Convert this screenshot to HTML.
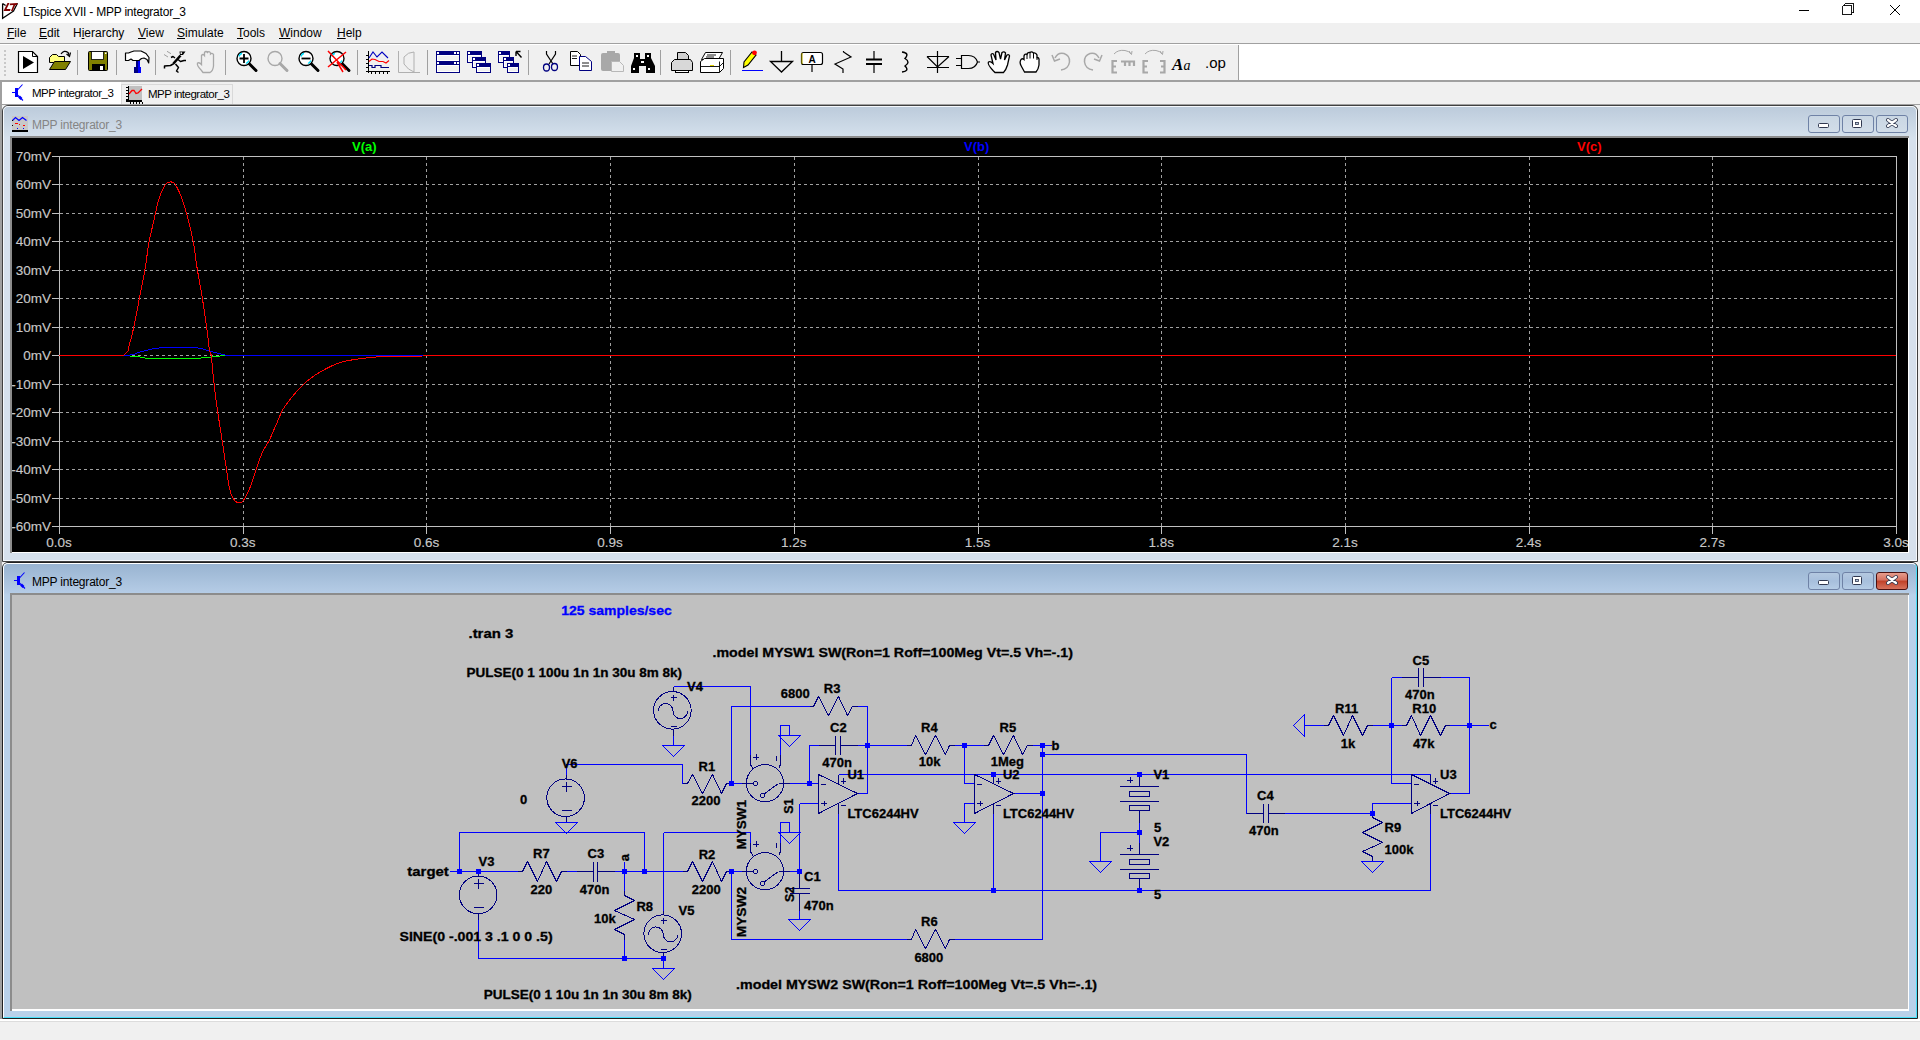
<!DOCTYPE html>
<html><head><meta charset="utf-8"><style>
html,body{margin:0;padding:0;width:1920px;height:1040px;overflow:hidden;background:#f0f0f0}
.t{position:absolute;font-family:"Liberation Sans",sans-serif;white-space:nowrap;line-height:1;color:#000}
svg{position:absolute;left:0;top:0}
</style></head><body>
<div style="position:absolute;left:0;top:0;width:1920px;height:23px;background:#fff"></div>
<div class="t" style="left:23px;top:6px;font-size:12px;letter-spacing:-0.22px;color:#000">LTspice XVII - MPP integrator_3</div>
<div style="position:absolute;left:0;top:23px;width:1920px;height:20px;background:#f0f0f0"></div>
<div style="position:absolute;left:0;top:43px;width:1920px;height:1px;background:#a0a0a0"></div>
<div style="position:absolute;left:0;top:44px;width:1920px;height:1px;background:#ffffff"></div>
<div class="t" style="left:7px;top:27px;font-size:12px"><u>F</u>ile</div>
<div class="t" style="left:39px;top:27px;font-size:12px"><u>E</u>dit</div>
<div class="t" style="left:73px;top:27px;font-size:12px">H<u>i</u>erarchy</div>
<div class="t" style="left:138px;top:27px;font-size:12px"><u>V</u>iew</div>
<div class="t" style="left:177px;top:27px;font-size:12px"><u>S</u>imulate</div>
<div class="t" style="left:237px;top:27px;font-size:12px"><u>T</u>ools</div>
<div class="t" style="left:279px;top:27px;font-size:12px"><u>W</u>indow</div>
<div class="t" style="left:337px;top:27px;font-size:12px"><u>H</u>elp</div>
<div style="position:absolute;left:0;top:45px;width:1238px;height:35px;background:#f0f0f0"></div>
<div style="position:absolute;left:1238px;top:45px;width:1px;height:35px;background:#a0a0a0"></div>
<div style="position:absolute;left:1239px;top:45px;width:681px;height:35px;background:#fff"></div>
<div style="position:absolute;left:0;top:80px;width:1920px;height:2px;background:#a0a0a0"></div>
<div style="position:absolute;left:0;top:82px;width:1920px;height:23px;background:#f0f0f0"></div>
<div style="position:absolute;left:0;top:80px;width:2px;height:940px;background:#a0a0a0"></div>
<div style="position:absolute;left:2px;top:82px;width:119px;height:22px;background:#fff"></div>
<div style="position:absolute;left:121px;top:84px;width:112px;height:20px;background:#f0f0f0;box-sizing:border-box;border:1px solid #d9d9d9;border-bottom:none"></div>
<div class="t" style="left:32px;top:88px;font-size:11.5px;letter-spacing:-0.5px">MPP integrator_3</div>
<div class="t" style="left:148px;top:89px;font-size:11.5px;letter-spacing:-0.5px">MPP integrator_3</div>
<div style="position:absolute;left:2px;top:104px;width:1918px;height:1px;background:#a0a0a0"></div>
<div style="position:absolute;left:2px;top:105px;width:1918px;height:916px;background:#f0f0f0"></div>
<div style="position:absolute;left:0;top:1019px;width:1920px;height:2px;background:#ffffff"></div>
<div style="position:absolute;left:0;top:1021px;width:1920px;height:1px;background:#dcdcdc"></div>
<div style="position:absolute;left:0;top:1022px;width:1920px;height:18px;background:#f0f0f0"></div>
<div style="position:absolute;left:2px;top:105px;width:1916px;height:457px;box-sizing:border-box;border:1px solid #404040;border-radius:6px 6px 0 0;background:#d6e1ed"></div>
<div style="position:absolute;left:3px;top:106px;width:1914px;height:455px;box-sizing:border-box;border:1px solid #f4f8fc;border-radius:5px 5px 0 0;background:linear-gradient(#bccbdb 0px,#d3dfeb 28px,#d6e1ed 31px)"></div>
<div style="position:absolute;left:10px;top:136px;width:1899px;height:417px;background:#fff;border-top:2px solid #8c8c8c;border-left:2px solid #8c8c8c;box-sizing:border-box"></div>
<div style="position:absolute;left:12px;top:138px;width:1896px;height:414px;background:#000"></div>
<div class="t" style="left:32px;top:119px;font-size:12px;letter-spacing:-0.2px;color:#858585">MPP integrator_3</div>
<div style="position:absolute;left:2px;top:562px;width:1916px;height:457px;box-sizing:border-box;border:1px solid #202020;border-radius:6px 6px 0 0;background:#b9d1ea"></div>
<div style="position:absolute;left:3px;top:563px;width:1914px;height:455px;box-sizing:border-box;border:1px solid #ffffff;border-right-color:#48e0fa;border-bottom-color:#48e0fa;border-radius:5px 5px 0 0;background:linear-gradient(#99b4d1 0px,#b4cbe5 28px,#b9d1ea 31px)"></div>
<div style="position:absolute;left:10px;top:593px;width:1899px;height:418px;background:#fff;border-top:2px solid #8c8c8c;border-left:2px solid #8c8c8c;box-sizing:border-box"></div>
<div style="position:absolute;left:12px;top:595px;width:1896px;height:414px;background:#c0c0c0"></div>
<div class="t" style="left:32px;top:576px;font-size:12px;letter-spacing:-0.2px;color:#000">MPP integrator_3</div>
<svg width="1920" height="1040" viewBox="0 0 1920 1040" font-family="Liberation Sans">
<svg x="12" y="138" width="1896" height="414" viewBox="12 138 1896 414" overflow="hidden">
<g shape-rendering="crispEdges">
<line x1="243.5" y1="157" x2="243.5" y2="526" stroke="#a0a0a0" stroke-dasharray="3 3"/>
<line x1="426.5" y1="157" x2="426.5" y2="526" stroke="#a0a0a0" stroke-dasharray="3 3"/>
<line x1="610.5" y1="157" x2="610.5" y2="526" stroke="#a0a0a0" stroke-dasharray="3 3"/>
<line x1="794.5" y1="157" x2="794.5" y2="526" stroke="#a0a0a0" stroke-dasharray="3 3"/>
<line x1="978.5" y1="157" x2="978.5" y2="526" stroke="#a0a0a0" stroke-dasharray="3 3"/>
<line x1="1161.5" y1="157" x2="1161.5" y2="526" stroke="#a0a0a0" stroke-dasharray="3 3"/>
<line x1="1345.5" y1="157" x2="1345.5" y2="526" stroke="#a0a0a0" stroke-dasharray="3 3"/>
<line x1="1529.5" y1="157" x2="1529.5" y2="526" stroke="#a0a0a0" stroke-dasharray="3 3"/>
<line x1="1712.5" y1="157" x2="1712.5" y2="526" stroke="#a0a0a0" stroke-dasharray="3 3"/>
<line x1="60" y1="184.5" x2="1896" y2="184.5" stroke="#a0a0a0" stroke-dasharray="3 3"/>
<line x1="60" y1="213.5" x2="1896" y2="213.5" stroke="#a0a0a0" stroke-dasharray="3 3"/>
<line x1="60" y1="241.5" x2="1896" y2="241.5" stroke="#a0a0a0" stroke-dasharray="3 3"/>
<line x1="60" y1="270.5" x2="1896" y2="270.5" stroke="#a0a0a0" stroke-dasharray="3 3"/>
<line x1="60" y1="298.5" x2="1896" y2="298.5" stroke="#a0a0a0" stroke-dasharray="3 3"/>
<line x1="60" y1="327.5" x2="1896" y2="327.5" stroke="#a0a0a0" stroke-dasharray="3 3"/>
<line x1="60" y1="355.5" x2="1896" y2="355.5" stroke="#a0a0a0" stroke-dasharray="3 3"/>
<line x1="60" y1="384.5" x2="1896" y2="384.5" stroke="#a0a0a0" stroke-dasharray="3 3"/>
<line x1="60" y1="412.5" x2="1896" y2="412.5" stroke="#a0a0a0" stroke-dasharray="3 3"/>
<line x1="60" y1="441.5" x2="1896" y2="441.5" stroke="#a0a0a0" stroke-dasharray="3 3"/>
<line x1="60" y1="469.5" x2="1896" y2="469.5" stroke="#a0a0a0" stroke-dasharray="3 3"/>
<line x1="60" y1="498.5" x2="1896" y2="498.5" stroke="#a0a0a0" stroke-dasharray="3 3"/>
<rect x="59.5" y="156.5" width="1837" height="370" fill="none" stroke="#c0c0c0"/>
<line x1="59.5" y1="526" x2="59.5" y2="534" stroke="#c0c0c0"/>
<line x1="243.5" y1="526" x2="243.5" y2="534" stroke="#c0c0c0"/>
<line x1="426.5" y1="526" x2="426.5" y2="534" stroke="#c0c0c0"/>
<line x1="610.5" y1="526" x2="610.5" y2="534" stroke="#c0c0c0"/>
<line x1="794.5" y1="526" x2="794.5" y2="534" stroke="#c0c0c0"/>
<line x1="978.5" y1="526" x2="978.5" y2="534" stroke="#c0c0c0"/>
<line x1="1161.5" y1="526" x2="1161.5" y2="534" stroke="#c0c0c0"/>
<line x1="1345.5" y1="526" x2="1345.5" y2="534" stroke="#c0c0c0"/>
<line x1="1529.5" y1="526" x2="1529.5" y2="534" stroke="#c0c0c0"/>
<line x1="1712.5" y1="526" x2="1712.5" y2="534" stroke="#c0c0c0"/>
<line x1="1896.5" y1="526" x2="1896.5" y2="534" stroke="#c0c0c0"/>
<line x1="52" y1="156.5" x2="59" y2="156.5" stroke="#c0c0c0"/>
<line x1="52" y1="184.5" x2="59" y2="184.5" stroke="#c0c0c0"/>
<line x1="52" y1="213.5" x2="59" y2="213.5" stroke="#c0c0c0"/>
<line x1="52" y1="241.5" x2="59" y2="241.5" stroke="#c0c0c0"/>
<line x1="52" y1="270.5" x2="59" y2="270.5" stroke="#c0c0c0"/>
<line x1="52" y1="298.5" x2="59" y2="298.5" stroke="#c0c0c0"/>
<line x1="52" y1="327.5" x2="59" y2="327.5" stroke="#c0c0c0"/>
<line x1="52" y1="355.5" x2="59" y2="355.5" stroke="#c0c0c0"/>
<line x1="52" y1="384.5" x2="59" y2="384.5" stroke="#c0c0c0"/>
<line x1="52" y1="412.5" x2="59" y2="412.5" stroke="#c0c0c0"/>
<line x1="52" y1="441.5" x2="59" y2="441.5" stroke="#c0c0c0"/>
<line x1="52" y1="469.5" x2="59" y2="469.5" stroke="#c0c0c0"/>
<line x1="52" y1="498.5" x2="59" y2="498.5" stroke="#c0c0c0"/>
<line x1="52" y1="526.5" x2="59" y2="526.5" stroke="#c0c0c0"/>
</g>
<g font-family="Liberation Sans" font-size="13.5" fill="#c8c8c8" stroke="#c8c8c8" stroke-width="0.15">
<text x="51" y="161" text-anchor="end">70mV</text>
<text x="51" y="189" text-anchor="end">60mV</text>
<text x="51" y="218" text-anchor="end">50mV</text>
<text x="51" y="246" text-anchor="end">40mV</text>
<text x="51" y="275" text-anchor="end">30mV</text>
<text x="51" y="303" text-anchor="end">20mV</text>
<text x="51" y="332" text-anchor="end">10mV</text>
<text x="51" y="360" text-anchor="end">0mV</text>
<text x="51" y="389" text-anchor="end">-10mV</text>
<text x="51" y="417" text-anchor="end">-20mV</text>
<text x="51" y="446" text-anchor="end">-30mV</text>
<text x="51" y="474" text-anchor="end">-40mV</text>
<text x="51" y="503" text-anchor="end">-50mV</text>
<text x="51" y="531" text-anchor="end">-60mV</text>
<text x="59.0" y="547" text-anchor="middle">0.0s</text>
<text x="242.7" y="547" text-anchor="middle">0.3s</text>
<text x="426.4" y="547" text-anchor="middle">0.6s</text>
<text x="610.1" y="547" text-anchor="middle">0.9s</text>
<text x="793.8" y="547" text-anchor="middle">1.2s</text>
<text x="977.5" y="547" text-anchor="middle">1.5s</text>
<text x="1161.2" y="547" text-anchor="middle">1.8s</text>
<text x="1344.9" y="547" text-anchor="middle">2.1s</text>
<text x="1528.6" y="547" text-anchor="middle">2.4s</text>
<text x="1712.3" y="547" text-anchor="middle">2.7s</text>
<text x="1896.0" y="547" text-anchor="middle">3.0s</text>
</g>
<g font-family="Liberation Sans" font-size="13" font-weight="bold">
<text x="352" y="151" fill="#00ff00">V(a)</text>
<text x="964" y="151" fill="#0000ff">V(b)</text>
<text x="1577" y="151" fill="#ff0000">V(c)</text>
</g>
<polyline points="125.00,355.50 126.67,355.66 129.00,355.89 131.75,356.16 134.67,356.44 137.50,356.73 140.00,357.00 141.85,357.27 143.19,357.56 144.44,357.84 146.04,358.11 148.41,358.34 152.00,358.50 157.35,358.60 164.22,358.65 171.88,358.66 179.56,358.63 186.51,358.58 192.00,358.50 195.84,358.40 198.59,358.26 200.62,358.09 202.30,357.91 203.97,357.71 206.00,357.50 208.41,357.27 210.93,357.00 213.44,356.72 215.85,356.44 218.07,356.20 220.00,356.00 221.65,355.85 223.11,355.74 224.38,355.66 225.44,355.59 226.32,355.54 227.00,355.50" fill="none" stroke="#00ff00" stroke-width="1" shape-rendering="crispEdges"/>
<polyline points="59.00,355.50 66.64,355.54 77.67,355.63 90.50,355.72 103.56,355.76 115.25,355.70 124.00,355.50 129.57,355.11 133.19,354.56 135.44,353.91 136.93,353.22 138.25,352.57 140.00,352.00 141.99,351.52 143.70,351.06 145.25,350.64 146.74,350.24 148.29,349.86 150.00,349.50 151.69,349.15 153.22,348.81 154.81,348.49 156.67,348.21 158.99,347.98 162.00,347.80 166.08,347.70 171.15,347.66 176.69,347.66 182.19,347.70 187.13,347.75 191.00,347.80 193.65,347.83 195.46,347.84 196.72,347.87 197.70,347.94 198.70,348.07 200.00,348.30 201.57,348.66 203.19,349.13 204.83,349.67 206.44,350.23 208.01,350.75 209.50,351.20 210.88,351.56 212.16,351.86 213.39,352.12 214.62,352.39 215.91,352.67 217.30,353.00 218.92,353.41 220.75,353.87 222.64,354.36 224.41,354.83 225.92,355.22 227.00,355.50 1896.00,355.50" fill="none" stroke="#0000ff" stroke-width="1" shape-rendering="crispEdges"/>
<polyline points="59.00,355.50 123.30,355.50 128.60,350.20 129.30,344.00 129.54,343.28 129.87,342.39 130.26,341.29 130.70,339.93 131.19,338.28 131.70,336.30 132.25,333.95 132.86,331.26 133.50,328.28 134.18,325.06 134.88,321.65 135.60,318.10 136.35,314.33 137.13,310.27 137.94,306.03 138.77,301.69 139.59,297.35 140.40,293.10 141.21,288.94 142.04,284.80 142.86,280.66 143.67,276.51 144.46,272.32 145.20,268.10 145.88,263.77 146.50,259.33 147.10,254.86 147.70,250.44 148.32,246.16 149.00,242.10 149.74,238.30 150.52,234.71 151.33,231.25 152.16,227.86 152.98,224.47 153.80,221.00 154.60,217.38 155.40,213.66 156.19,209.93 157.00,206.30 157.84,202.89 158.70,199.80 159.62,196.99 160.61,194.37 161.61,191.96 162.60,189.80 163.54,187.90 164.40,186.30 165.14,185.06 165.80,184.17 166.41,183.56 167.00,183.13 167.62,182.80 168.30,182.50 169.06,182.22 169.87,182.04 170.71,181.96 171.54,182.00 172.35,182.18 173.10,182.50 173.77,182.92 174.37,183.42 174.94,184.06 175.52,184.88 176.16,185.94 176.90,187.30 177.75,188.97 178.69,190.91 179.68,193.09 180.69,195.48 181.71,198.06 182.70,200.80 183.68,203.77 184.67,207.00 185.66,210.43 186.64,213.95 187.59,217.50 188.50,221.00 189.37,224.41 190.21,227.79 191.03,231.19 191.81,234.67 192.57,238.29 193.30,242.10 193.99,246.19 194.64,250.55 195.26,255.04 195.86,259.54 196.47,263.94 197.10,268.10 197.75,271.99 198.40,275.69 199.05,279.28 199.70,282.84 200.35,286.45 201.00,290.20 201.65,294.12 202.31,298.16 202.96,302.26 203.60,306.34 204.22,310.34 204.80,314.20 205.35,317.96 205.87,321.69 206.37,325.34 206.84,328.87 207.28,332.23 207.70,335.40 208.08,338.42 208.42,341.36 208.73,344.12 209.03,346.67 209.31,348.91 209.60,350.80 209.87,351.97 210.12,352.40 210.36,352.54 210.60,352.83 210.88,353.70 211.20,355.60 211.57,358.67 211.96,362.60 212.38,367.12 212.83,371.95 213.30,376.83 213.80,381.50 214.32,386.01 214.87,390.60 215.44,395.24 216.04,399.90 216.66,404.56 217.30,409.20 217.97,413.80 218.67,418.37 219.39,422.94 220.13,427.54 220.87,432.18 221.60,436.90 222.34,441.79 223.10,446.86 223.86,451.97 224.60,457.01 225.32,461.83 226.00,466.30 226.61,470.48 227.17,474.49 227.71,478.29 228.24,481.83 228.79,485.08 229.40,488.00 230.05,490.56 230.71,492.79 231.40,494.72 232.12,496.40 232.89,497.88 233.70,499.20 234.59,500.35 235.57,501.29 236.58,502.02 237.60,502.55 238.59,502.87 239.50,503.00 240.32,502.94 241.07,502.70 241.78,502.26 242.50,501.60 243.26,500.68 244.10,499.50 245.04,497.99 246.06,496.14 247.11,494.06 248.18,491.80 249.22,489.45 250.20,487.10 251.10,484.72 251.94,482.26 252.75,479.71 253.57,477.07 254.45,474.33 255.40,471.50 256.45,468.45 257.57,465.16 258.74,461.78 259.94,458.45 261.13,455.31 262.30,452.50 263.45,450.12 264.60,448.09 265.75,446.24 266.90,444.44 268.05,442.54 269.20,440.40 270.35,438.00 271.50,435.46 272.64,432.82 273.79,430.13 274.94,427.44 276.10,424.80 277.22,422.18 278.30,419.53 279.39,416.89 280.52,414.27 281.74,411.70 283.10,409.20 284.62,406.77 286.29,404.37 288.04,402.03 289.84,399.75 291.64,397.53 293.40,395.40 295.11,393.35 296.80,391.38 298.49,389.48 300.20,387.64 301.97,385.85 303.80,384.10 305.68,382.40 307.58,380.77 309.53,379.18 311.54,377.63 313.66,376.11 315.90,374.60 318.34,373.07 320.97,371.51 323.70,369.98 326.43,368.52 329.06,367.18 331.50,366.00 333.72,365.00 335.79,364.14 337.77,363.40 339.70,362.75 341.62,362.16 343.60,361.60 345.56,361.10 347.44,360.70 349.33,360.36 351.28,360.04 353.38,359.74 355.70,359.40 358.28,359.03 361.08,358.65 364.02,358.27 367.04,357.91 370.06,357.59 373.00,357.30 375.70,357.06 378.19,356.86 380.67,356.69 383.38,356.54 386.51,356.41 390.30,356.30 395.23,356.21 401.23,356.16 407.66,356.12 413.89,356.09 419.28,356.05 423.20,356.00 425.44,355.92 426.47,355.83 426.66,355.73 426.39,355.64 426.04,355.56 426.00,355.50 1896.00,355.50" fill="none" stroke="#ff0000" stroke-width="1" shape-rendering="crispEdges"/>
</svg>
<svg x="12" y="595" width="1896" height="414" viewBox="12 595 1896 414" overflow="hidden">
<g shape-rendering="crispEdges" stroke-width="1">
<polyline points="673.5,686.5 750.5,686.5 750.5,754.5" fill="none" stroke="#0000ff"/>
<polyline points="673.5,735.5 673.5,745.5" fill="none" stroke="#0000ff"/>
<polyline points="731.5,783.5 741.5,783.5" fill="none" stroke="#0000ff"/>
<polyline points="789.5,783.5 809.5,783.5" fill="none" stroke="#0000ff"/>
<polyline points="780.5,754.5 780.5,725.5 789.5,725.5 789.5,735.5" fill="none" stroke="#0000ff"/>
<polyline points="566.5,774.5 566.5,764.5 682.5,764.5 682.5,783.5" fill="none" stroke="#0000ff"/>
<polyline points="731.5,783.5 731.5,706.5 809.5,706.5" fill="none" stroke="#0000ff"/>
<polyline points="857.5,706.5 867.5,706.5 867.5,793.5 857.5,793.5" fill="none" stroke="#0000ff"/>
<polyline points="809.5,783.5 809.5,745.5 818.5,745.5" fill="none" stroke="#0000ff"/>
<polyline points="857.5,745.5 906.5,745.5" fill="none" stroke="#0000ff"/>
<polyline points="809.5,783.5 818.5,783.5" fill="none" stroke="#0000ff"/>
<polyline points="799.5,803.5 818.5,803.5" fill="none" stroke="#0000ff"/>
<polyline points="799.5,803.5 799.5,871.5" fill="none" stroke="#0000ff"/>
<polyline points="838.5,774.5 1430.5,774.5" fill="none" stroke="#0000ff"/>
<polyline points="838.5,813.5 838.5,890.5 1430.5,890.5 1430.5,813.5" fill="none" stroke="#0000ff"/>
<polyline points="954.5,745.5 983.5,745.5" fill="none" stroke="#0000ff"/>
<polyline points="1032.5,745.5 1051.5,745.5" fill="none" stroke="#0000ff"/>
<polyline points="964.5,745.5 964.5,783.5 974.5,783.5" fill="none" stroke="#0000ff"/>
<polyline points="974.5,803.5 964.5,803.5 964.5,822.5" fill="none" stroke="#0000ff"/>
<polyline points="1013.5,793.5 1042.5,793.5" fill="none" stroke="#0000ff"/>
<polyline points="993.5,813.5 993.5,890.5" fill="none" stroke="#0000ff"/>
<polyline points="1042.5,745.5 1042.5,939.5 954.5,939.5" fill="none" stroke="#0000ff"/>
<polyline points="1042.5,754.5 1246.5,754.5 1246.5,813.5" fill="none" stroke="#0000ff"/>
<polyline points="1284.5,813.5 1372.5,813.5" fill="none" stroke="#0000ff"/>
<polyline points="1139.5,822.5 1139.5,842.5" fill="none" stroke="#0000ff"/>
<polyline points="1139.5,832.5 1100.5,832.5 1100.5,861.5" fill="none" stroke="#0000ff"/>
<polyline points="1411.5,803.5 1372.5,803.5 1372.5,813.5" fill="none" stroke="#0000ff"/>
<polyline points="1391.5,677.5 1391.5,783.5 1411.5,783.5" fill="none" stroke="#0000ff"/>
<polyline points="1449.5,793.5 1469.5,793.5 1469.5,677.5 1440.5,677.5" fill="none" stroke="#0000ff"/>
<polyline points="1391.5,677.5 1401.5,677.5" fill="none" stroke="#0000ff"/>
<polyline points="1304.5,725.5 1323.5,725.5" fill="none" stroke="#0000ff"/>
<polyline points="1372.5,725.5 1401.5,725.5" fill="none" stroke="#0000ff"/>
<polyline points="1449.5,725.5 1488.5,725.5" fill="none" stroke="#0000ff"/>
<polyline points="449.5,871.5 517.5,871.5" fill="none" stroke="#0000ff"/>
<polyline points="566.5,871.5 576.5,871.5" fill="none" stroke="#0000ff"/>
<polyline points="614.5,871.5 682.5,871.5" fill="none" stroke="#0000ff"/>
<polyline points="478.5,919.5 478.5,958.5 663.5,958.5" fill="none" stroke="#0000ff"/>
<polyline points="459.5,871.5 459.5,832.5 644.5,832.5 644.5,871.5" fill="none" stroke="#0000ff"/>
<polyline points="663.5,832.5 663.5,910.5" fill="none" stroke="#0000ff"/>
<polyline points="663.5,832.5 750.5,832.5 750.5,842.5" fill="none" stroke="#0000ff"/>
<polyline points="624.5,861.5 624.5,890.5" fill="none" stroke="#0000ff"/>
<polyline points="624.5,939.5 624.5,958.5" fill="none" stroke="#0000ff"/>
<polyline points="663.5,958.5 663.5,968.5" fill="none" stroke="#0000ff"/>
<polyline points="731.5,871.5 741.5,871.5" fill="none" stroke="#0000ff"/>
<polyline points="789.5,871.5 799.5,871.5" fill="none" stroke="#0000ff"/>
<polyline points="780.5,842.5 780.5,822.5 789.5,822.5 789.5,832.5" fill="none" stroke="#0000ff"/>
<polyline points="731.5,871.5 731.5,939.5 906.5,939.5" fill="none" stroke="#0000ff"/>
<polyline points="799.5,910.5 799.5,919.5" fill="none" stroke="#0000ff"/>
<polyline points="566.5,822.5 566.5,822.5" fill="none" stroke="#0000ff"/>
<line x1="673.5" y1="686.5" x2="673.5" y2="691.5" stroke="#000080"/>
<line x1="673.5" y1="729.3749999999999" x2="673.5" y2="735.5" stroke="#000080"/>
<circle cx="672.39" cy="710.37" r="18.8" fill="none" stroke="#000080"/>
<line x1="670.5" y1="697.5" x2="676.5" y2="697.5" stroke="#000080"/>
<line x1="673.5" y1="694.5" x2="673.5" y2="700.5" stroke="#000080"/>
<line x1="670.5" y1="726.5" x2="676.5" y2="726.5" stroke="#000080"/>
<path d="M658.19 711.17 A 7.4 7.6 0 0 1 672.99 711.17 A 7.3 7.4 0 0 0 687.59 711.17" fill="none" stroke="#000080"/>
<polygon points="662.5,745.5 684.5,745.5 673.5,756.5" fill="none" stroke="#0000ff" stroke-linejoin="bevel"/>
<circle cx="765.00" cy="783.20" r="18.6" fill="none" stroke="#000080"/>
<line x1="750.5" y1="754.5" x2="750.5" y2="764.5" stroke="#000080"/>
<line x1="750.5" y1="764.5" x2="753.0" y2="769.0" stroke="#000080"/>
<line x1="780.5" y1="754.5" x2="780.5" y2="764.5" stroke="#000080"/>
<line x1="780.5" y1="764.5" x2="779.0" y2="767.5" stroke="#000080"/>
<line x1="753.2" y1="757.0" x2="758.8" y2="757.0" stroke="#000080"/>
<line x1="756.0" y1="754.2" x2="756.0" y2="759.8" stroke="#000080"/>
<line x1="776.0" y1="755.5" x2="776.0" y2="760.5" stroke="#000080"/>
<line x1="741.5" y1="783.5" x2="753.3" y2="783.5" stroke="#000080"/>
<circle cx="755.5" cy="783.5" r="2" fill="none" stroke="#000080"/>
<circle cx="762.5" cy="795.5" r="2" fill="none" stroke="#000080"/>
<line x1="764.0" y1="794.0" x2="778.5" y2="783.5" stroke="#000080"/>
<line x1="778.5" y1="783.5" x2="789.5" y2="783.5" stroke="#000080"/>
<polygon points="778.5,735.5 800.5,735.5 789.5,746.5" fill="none" stroke="#0000ff" stroke-linejoin="bevel"/>
<polyline points="682.50,783.50 687.50,783.50 692.50,774.50 702.50,793.50 712.50,774.50 721.50,793.50 726.50,783.50 731.50,783.50" fill="none" stroke="#000080" stroke-linejoin="bevel"/>
<polyline points="809.50,706.50 813.50,706.50 818.50,696.50 828.50,715.50 838.50,696.50 847.50,715.50 852.50,706.50 857.50,706.50" fill="none" stroke="#000080" stroke-linejoin="bevel"/>
<line x1="818.5" y1="745.5" x2="835.5" y2="745.5" stroke="#000080"/>
<line x1="840.5" y1="745.5" x2="857.5" y2="745.5" stroke="#000080"/>
<line x1="835.5" y1="735.5" x2="835.5" y2="754.5" stroke="#000080"/>
<line x1="840.5" y1="735.5" x2="840.5" y2="754.5" stroke="#000080"/>
<polygon points="818.5,774.5 857.5,793.5 818.5,813.5" fill="none" stroke="#000080"/>
<line x1="838.5" y1="774.5" x2="838.5" y2="783.5" stroke="#000080"/>
<line x1="838.5" y1="803.5" x2="838.5" y2="813.5" stroke="#000080"/>
<line x1="820.5" y1="784.0" x2="826.0999999999999" y2="784.0" stroke="#000080"/>
<line x1="821.2" y1="803.5" x2="826.8" y2="803.5" stroke="#000080"/>
<line x1="824.0" y1="800.7" x2="824.0" y2="806.3" stroke="#000080"/>
<line x1="840.7" y1="781.0" x2="846.3" y2="781.0" stroke="#000080"/>
<line x1="843.5" y1="778.2" x2="843.5" y2="783.8" stroke="#000080"/>
<line x1="840.7" y1="805.7" x2="846.3" y2="805.7" stroke="#000080"/>
<polygon points="974.5,774.5 1013.5,793.5 974.5,813.5" fill="none" stroke="#000080"/>
<line x1="993.5" y1="774.5" x2="993.5" y2="783.5" stroke="#000080"/>
<line x1="993.5" y1="803.5" x2="993.5" y2="813.5" stroke="#000080"/>
<line x1="976.5" y1="784.0" x2="982.0999999999999" y2="784.0" stroke="#000080"/>
<line x1="977.2" y1="803.5" x2="982.8" y2="803.5" stroke="#000080"/>
<line x1="980.0" y1="800.7" x2="980.0" y2="806.3" stroke="#000080"/>
<line x1="995.7" y1="781.0" x2="1001.3" y2="781.0" stroke="#000080"/>
<line x1="998.5" y1="778.2" x2="998.5" y2="783.8" stroke="#000080"/>
<line x1="995.7" y1="805.7" x2="1001.3" y2="805.7" stroke="#000080"/>
<polygon points="1411.5,774.5 1449.5,793.5 1411.5,813.5" fill="none" stroke="#000080"/>
<line x1="1430.5" y1="774.5" x2="1430.5" y2="783.5" stroke="#000080"/>
<line x1="1430.5" y1="803.5" x2="1430.5" y2="813.5" stroke="#000080"/>
<line x1="1413.5" y1="784.0" x2="1419.1" y2="784.0" stroke="#000080"/>
<line x1="1414.2" y1="803.5" x2="1419.8" y2="803.5" stroke="#000080"/>
<line x1="1417.0" y1="800.7" x2="1417.0" y2="806.3" stroke="#000080"/>
<line x1="1432.7" y1="781.0" x2="1438.3" y2="781.0" stroke="#000080"/>
<line x1="1435.5" y1="778.2" x2="1435.5" y2="783.8" stroke="#000080"/>
<line x1="1432.7" y1="805.7" x2="1438.3" y2="805.7" stroke="#000080"/>
<polyline points="906.50,745.50 911.50,745.50 915.50,735.50 925.50,754.50 935.50,735.50 945.50,754.50 949.50,745.50 954.50,745.50" fill="none" stroke="#000080" stroke-linejoin="bevel"/>
<polyline points="983.50,745.50 988.50,745.50 993.50,735.50 1003.50,754.50 1013.50,735.50 1022.50,754.50 1027.50,745.50 1032.50,745.50" fill="none" stroke="#000080" stroke-linejoin="bevel"/>
<polygon points="953.5,822.5 975.5,822.5 964.5,833.5" fill="none" stroke="#0000ff" stroke-linejoin="bevel"/>
<line x1="1246.5" y1="813.5" x2="1263.5" y2="813.5" stroke="#000080"/>
<line x1="1268.5" y1="813.5" x2="1284.5" y2="813.5" stroke="#000080"/>
<line x1="1263.5" y1="803.5" x2="1263.5" y2="822.5" stroke="#000080"/>
<line x1="1268.5" y1="803.5" x2="1268.5" y2="822.5" stroke="#000080"/>
<line x1="1139.5" y1="774.5" x2="1139.5" y2="786.5" stroke="#000080"/>
<line x1="1119.5" y1="786.5" x2="1158.5" y2="786.5" stroke="#000080"/>
<rect x="1129.5" y="791.5" width="20.0" height="5" fill="none" stroke="#000080"/>
<line x1="1119.5" y1="801.5" x2="1158.5" y2="801.5" stroke="#000080"/>
<rect x="1129.5" y="805.5" width="20.0" height="5" fill="none" stroke="#000080"/>
<line x1="1139.5" y1="810.5" x2="1139.5" y2="822.5" stroke="#000080"/>
<line x1="1127.0" y1="780.0" x2="1133.0" y2="780.0" stroke="#000080"/>
<line x1="1130.0" y1="777.0" x2="1130.0" y2="783.0" stroke="#000080"/>
<line x1="1139.5" y1="842.5" x2="1139.5" y2="854.5" stroke="#000080"/>
<line x1="1119.5" y1="854.5" x2="1158.5" y2="854.5" stroke="#000080"/>
<rect x="1129.5" y="859.5" width="20.0" height="5" fill="none" stroke="#000080"/>
<line x1="1119.5" y1="869.5" x2="1158.5" y2="869.5" stroke="#000080"/>
<rect x="1129.5" y="873.5" width="20.0" height="5" fill="none" stroke="#000080"/>
<line x1="1139.5" y1="878.5" x2="1139.5" y2="890.5" stroke="#000080"/>
<line x1="1127.0" y1="848.0" x2="1133.0" y2="848.0" stroke="#000080"/>
<line x1="1130.0" y1="845.0" x2="1130.0" y2="851.0" stroke="#000080"/>
<polygon points="1089.5,861.5 1111.5,861.5 1100.5,872.5" fill="none" stroke="#0000ff" stroke-linejoin="bevel"/>
<polyline points="1372.50,813.50 1372.50,817.50 1382.50,822.50 1362.50,832.50 1382.50,842.50 1362.50,851.50 1372.50,856.50 1372.50,861.50" fill="none" stroke="#000080" stroke-linejoin="bevel"/>
<polygon points="1361.5,861.5 1383.5,861.5 1372.5,872.5" fill="none" stroke="#0000ff" stroke-linejoin="bevel"/>
<polyline points="1401.50,725.50 1406.50,725.50 1411.50,715.50 1420.50,735.50 1430.50,715.50 1440.50,735.50 1445.50,725.50 1449.50,725.50" fill="none" stroke="#000080" stroke-linejoin="bevel"/>
<polyline points="1323.50,725.50 1328.50,725.50 1333.50,715.50 1343.50,735.50 1352.50,715.50 1362.50,735.50 1367.50,725.50 1372.50,725.50" fill="none" stroke="#000080" stroke-linejoin="bevel"/>
<polygon points="1304.5,714.5 1304.5,736.5 1293.5,725.5" fill="none" stroke="#0000ff"/>
<line x1="1401.5" y1="677.5" x2="1418.5" y2="677.5" stroke="#000080"/>
<line x1="1423.5" y1="677.5" x2="1440.5" y2="677.5" stroke="#000080"/>
<line x1="1418.5" y1="667.5" x2="1418.5" y2="686.5" stroke="#000080"/>
<line x1="1423.5" y1="667.5" x2="1423.5" y2="686.5" stroke="#000080"/>
<line x1="566.5" y1="774.5" x2="566.5" y2="779.5" stroke="#000080"/>
<line x1="566.5" y1="816.765" x2="566.5" y2="822.5" stroke="#000080"/>
<circle cx="565.58" cy="797.76" r="18.8" fill="none" stroke="#000080"/>
<line x1="561.5" y1="786.765" x2="571.5" y2="786.765" stroke="#000080"/>
<line x1="566.5" y1="781.765" x2="566.5" y2="791.765" stroke="#000080"/>
<line x1="561.5" y1="810.765" x2="571.5" y2="810.765" stroke="#000080"/>
<polygon points="555.5,822.5 577.5,822.5 566.5,833.5" fill="none" stroke="#0000ff" stroke-linejoin="bevel"/>
<line x1="478.5" y1="871.5" x2="478.5" y2="876.5" stroke="#000080"/>
<line x1="478.5" y1="913.8649999999999" x2="478.5" y2="919.5" stroke="#000080"/>
<circle cx="478.19" cy="894.86" r="18.8" fill="none" stroke="#000080"/>
<line x1="473.5" y1="883.8649999999999" x2="483.5" y2="883.8649999999999" stroke="#000080"/>
<line x1="478.5" y1="878.8649999999999" x2="478.5" y2="888.8649999999999" stroke="#000080"/>
<line x1="473.5" y1="907.8649999999999" x2="483.5" y2="907.8649999999999" stroke="#000080"/>
<polyline points="517.50,871.50 522.50,871.50 527.50,861.50 537.50,881.50 546.50,861.50 556.50,881.50 561.50,871.50 566.50,871.50" fill="none" stroke="#000080" stroke-linejoin="bevel"/>
<line x1="576.5" y1="871.5" x2="593.5" y2="871.5" stroke="#000080"/>
<line x1="597.5" y1="871.5" x2="614.5" y2="871.5" stroke="#000080"/>
<line x1="593.5" y1="861.5" x2="593.5" y2="881.5" stroke="#000080"/>
<line x1="597.5" y1="861.5" x2="597.5" y2="881.5" stroke="#000080"/>
<polyline points="624.50,890.50 624.50,895.50 634.50,900.50 614.50,910.50 634.50,919.50 614.50,929.50 624.50,934.50 624.50,939.50" fill="none" stroke="#000080" stroke-linejoin="bevel"/>
<line x1="663.5" y1="910.5" x2="663.5" y2="914.5" stroke="#000080"/>
<line x1="663.5" y1="952.7049999999999" x2="663.5" y2="958.5" stroke="#000080"/>
<circle cx="662.68" cy="933.70" r="18.8" fill="none" stroke="#000080"/>
<line x1="660.5" y1="920.5" x2="666.5" y2="920.5" stroke="#000080"/>
<line x1="663.5" y1="917.5" x2="663.5" y2="923.5" stroke="#000080"/>
<line x1="660.5" y1="949.5" x2="666.5" y2="949.5" stroke="#000080"/>
<path d="M648.48 934.50 A 7.4 7.6 0 0 1 663.28 934.50 A 7.3 7.4 0 0 0 677.88 934.50" fill="none" stroke="#000080"/>
<polygon points="652.5,968.5 674.5,968.5 663.5,979.5" fill="none" stroke="#0000ff" stroke-linejoin="bevel"/>
<polyline points="682.50,871.50 687.50,871.50 692.50,861.50 702.50,881.50 712.50,861.50 721.50,881.50 726.50,871.50 731.50,871.50" fill="none" stroke="#000080" stroke-linejoin="bevel"/>
<circle cx="765.00" cy="871.20" r="18.6" fill="none" stroke="#000080"/>
<line x1="750.5" y1="842.5" x2="750.5" y2="851.5" stroke="#000080"/>
<line x1="750.5" y1="851.5" x2="753.0" y2="856.0" stroke="#000080"/>
<line x1="780.5" y1="842.5" x2="780.5" y2="851.5" stroke="#000080"/>
<line x1="780.5" y1="851.5" x2="779.0" y2="854.5" stroke="#000080"/>
<line x1="753.2" y1="844.0" x2="758.8" y2="844.0" stroke="#000080"/>
<line x1="756.0" y1="841.2" x2="756.0" y2="846.8" stroke="#000080"/>
<line x1="776.0" y1="842.5" x2="776.0" y2="847.5" stroke="#000080"/>
<line x1="741.5" y1="871.5" x2="753.3" y2="871.5" stroke="#000080"/>
<circle cx="755.5" cy="871.5" r="2" fill="none" stroke="#000080"/>
<circle cx="762.5" cy="883.5" r="2" fill="none" stroke="#000080"/>
<line x1="764.0" y1="882.0" x2="778.5" y2="871.5" stroke="#000080"/>
<line x1="778.5" y1="871.5" x2="789.5" y2="871.5" stroke="#000080"/>
<polygon points="778.5,832.5 800.5,832.5 789.5,843.5" fill="none" stroke="#0000ff" stroke-linejoin="bevel"/>
<line x1="799.5" y1="871.5" x2="799.5" y2="888.5" stroke="#000080"/>
<line x1="799.5" y1="893.5" x2="799.5" y2="910.5" stroke="#000080"/>
<line x1="789.5" y1="888.5" x2="809.5" y2="888.5" stroke="#000080"/>
<line x1="789.5" y1="893.5" x2="809.5" y2="893.5" stroke="#000080"/>
<polygon points="788.5,919.5 810.5,919.5 799.5,930.5" fill="none" stroke="#0000ff" stroke-linejoin="bevel"/>
<polyline points="906.50,939.50 911.50,939.50 915.50,929.50 925.50,948.50 935.50,929.50 945.50,948.50 949.50,939.50 954.50,939.50" fill="none" stroke="#000080" stroke-linejoin="bevel"/>
<rect x="729.0" y="781.0" width="5" height="5" fill="#0000ff"/>
<rect x="807.0" y="781.0" width="5" height="5" fill="#0000ff"/>
<rect x="865.0" y="743.0" width="5" height="5" fill="#0000ff"/>
<rect x="962.0" y="743.0" width="5" height="5" fill="#0000ff"/>
<rect x="1040.0" y="743.0" width="5" height="5" fill="#0000ff"/>
<rect x="1040.0" y="752.0" width="5" height="5" fill="#0000ff"/>
<rect x="1040.0" y="791.0" width="5" height="5" fill="#0000ff"/>
<rect x="991.0" y="772.0" width="5" height="5" fill="#0000ff"/>
<rect x="1137.0" y="772.0" width="5" height="5" fill="#0000ff"/>
<rect x="991.0" y="888.0" width="5" height="5" fill="#0000ff"/>
<rect x="1137.0" y="888.0" width="5" height="5" fill="#0000ff"/>
<rect x="1137.0" y="830.0" width="5" height="5" fill="#0000ff"/>
<rect x="1370.0" y="811.0" width="5" height="5" fill="#0000ff"/>
<rect x="1389.0" y="723.0" width="5" height="5" fill="#0000ff"/>
<rect x="1467.0" y="723.0" width="5" height="5" fill="#0000ff"/>
<rect x="457.0" y="869.0" width="5" height="5" fill="#0000ff"/>
<rect x="476.0" y="869.0" width="5" height="5" fill="#0000ff"/>
<rect x="622.0" y="869.0" width="5" height="5" fill="#0000ff"/>
<rect x="642.0" y="869.0" width="5" height="5" fill="#0000ff"/>
<rect x="622.0" y="956.0" width="5" height="5" fill="#0000ff"/>
<rect x="661.0" y="956.0" width="5" height="5" fill="#0000ff"/>
<rect x="729.0" y="869.0" width="5" height="5" fill="#0000ff"/>
<rect x="797.0" y="869.0" width="5" height="5" fill="#0000ff"/>
</g>
<g font-family="Liberation Sans" font-weight="bold" stroke="currentColor" stroke-width="0.3">
<text x="561.3" y="614.6" fill="#0000ff" stroke="#0000ff" font-size="13" textLength="110.4" lengthAdjust="spacingAndGlyphs">125 samples/sec</text>
<text x="468.5" y="638.3" fill="#000" stroke="#000" font-size="13" textLength="44.8" lengthAdjust="spacingAndGlyphs">.tran 3</text>
<text x="712.5" y="657" fill="#000" stroke="#000" font-size="13" textLength="360.4" lengthAdjust="spacingAndGlyphs">.model MYSW1 SW(Ron=1 Roff=100Meg Vt=.5 Vh=-.1)</text>
<text x="466.5" y="676.5" fill="#000" stroke="#000" font-size="13" textLength="215.5" lengthAdjust="spacingAndGlyphs">PULSE(0 1 100u 1n 1n 30u 8m 8k)</text>
<text x="687" y="691" fill="#000" stroke="#000" font-size="13">V4</text>
<text x="780.8" y="697.7" fill="#000" stroke="#000" font-size="13">6800</text>
<text x="823.8" y="692.6" fill="#000" stroke="#000" font-size="13">R3</text>
<text x="830" y="731.9" fill="#000" stroke="#000" font-size="13">C2</text>
<text x="822.3" y="767" fill="#000" stroke="#000" font-size="13">470n</text>
<text x="921.1" y="732.3" fill="#000" stroke="#000" font-size="13">R4</text>
<text x="918.7" y="766.4" fill="#000" stroke="#000" font-size="13">10k</text>
<text x="999.5" y="732.3" fill="#000" stroke="#000" font-size="13">R5</text>
<text x="990.8" y="766.4" fill="#000" stroke="#000" font-size="13">1Meg</text>
<text x="1051.4" y="749.5" fill="#000" stroke="#000" font-size="13">b</text>
<text x="561.7" y="767.6" fill="#000" stroke="#000" font-size="13">V6</text>
<text x="698.5" y="770.8" fill="#000" stroke="#000" font-size="13">R1</text>
<text x="847.4" y="778.7" fill="#000" stroke="#000" font-size="13">U1</text>
<text x="1002.9" y="778.7" fill="#000" stroke="#000" font-size="13">U2</text>
<text x="1440" y="778.7" fill="#000" stroke="#000" font-size="13">U3</text>
<text x="1153.4" y="778.8" fill="#000" stroke="#000" font-size="13">V1</text>
<text x="691.5" y="805.4" fill="#000" stroke="#000" font-size="13">2200</text>
<text x="847.4" y="818.1" fill="#000" stroke="#000" font-size="13">LTC6244HV</text>
<text x="1002.9" y="818.1" fill="#000" stroke="#000" font-size="13">LTC6244HV</text>
<text x="1440" y="817.8" fill="#000" stroke="#000" font-size="13">LTC6244HV</text>
<text x="520" y="804" fill="#000" stroke="#000" font-size="13">0</text>
<text x="1257" y="799.7" fill="#000" stroke="#000" font-size="13">C4</text>
<text x="1249" y="835" fill="#000" stroke="#000" font-size="13">470n</text>
<text x="1154" y="831.7" fill="#000" stroke="#000" font-size="13">5</text>
<text x="1153.4" y="846.4" fill="#000" stroke="#000" font-size="13">V2</text>
<text x="1154" y="899.3" fill="#000" stroke="#000" font-size="13">5</text>
<text x="1384.5" y="831.5" fill="#000" stroke="#000" font-size="13">R9</text>
<text x="1384.5" y="853.6" fill="#000" stroke="#000" font-size="13">100k</text>
<text x="1412.5" y="664.5" fill="#000" stroke="#000" font-size="13">C5</text>
<text x="1405" y="698.8" fill="#000" stroke="#000" font-size="13">470n</text>
<text x="1335" y="712.5" fill="#000" stroke="#000" font-size="13">R11</text>
<text x="1340.7" y="747.5" fill="#000" stroke="#000" font-size="13">1k</text>
<text x="1412.3" y="712.7" fill="#000" stroke="#000" font-size="13">R10</text>
<text x="1412.9" y="747.6" fill="#000" stroke="#000" font-size="13">47k</text>
<text x="1489.5" y="729.3" fill="#000" stroke="#000" font-size="13">c</text>
<text x="407.3" y="875.6" fill="#000" stroke="#000" font-size="13" textLength="41.5" lengthAdjust="spacingAndGlyphs">target</text>
<text x="478.6" y="866" fill="#000" stroke="#000" font-size="13">V3</text>
<text x="533" y="857.8" fill="#000" stroke="#000" font-size="13">R7</text>
<text x="530.5" y="894" fill="#000" stroke="#000" font-size="13">220</text>
<text x="587.6" y="857.8" fill="#000" stroke="#000" font-size="13">C3</text>
<text x="579.8" y="894" fill="#000" stroke="#000" font-size="13">470n</text>
<text x="698.7" y="858.5" fill="#000" stroke="#000" font-size="13">R2</text>
<text x="691.7" y="893.9" fill="#000" stroke="#000" font-size="13">2200</text>
<text x="804.1" y="880.8" fill="#000" stroke="#000" font-size="13">C1</text>
<text x="804.1" y="910" fill="#000" stroke="#000" font-size="13">470n</text>
<text x="636.4" y="911.3" fill="#000" stroke="#000" font-size="13">R8</text>
<text x="594.1" y="923" fill="#000" stroke="#000" font-size="13">10k</text>
<text x="678.5" y="915" fill="#000" stroke="#000" font-size="13">V5</text>
<text x="399.5" y="940.8" fill="#000" stroke="#000" font-size="13" textLength="153.1" lengthAdjust="spacingAndGlyphs">SINE(0 -.001 3 .1 0 0 .5)</text>
<text x="921" y="926" fill="#000" stroke="#000" font-size="13">R6</text>
<text x="914.4" y="962" fill="#000" stroke="#000" font-size="13">6800</text>
<text x="483.8" y="998.5" fill="#000" stroke="#000" font-size="13" textLength="208" lengthAdjust="spacingAndGlyphs">PULSE(0 1 10u 1n 1n 30u 8m 8k)</text>
<text x="736.1" y="989.4" fill="#000" stroke="#000" font-size="13" textLength="361" lengthAdjust="spacingAndGlyphs">.model MYSW2 SW(Ron=1 Roff=100Meg Vt=.5 Vh=-.1)</text>
<text transform="translate(745.6,849.5) rotate(-90)" fill="#000" font-size="13" textLength="49.5" lengthAdjust="spacingAndGlyphs">MYSW1</text>
<text transform="translate(792.8,813.8) rotate(-90)" fill="#000" font-size="13" textLength="15.3" lengthAdjust="spacingAndGlyphs">S1</text>
<text transform="translate(745.6,937.3) rotate(-90)" fill="#000" font-size="13" textLength="50.5" lengthAdjust="spacingAndGlyphs">MYSW2</text>
<text transform="translate(793.6,901.9) rotate(-90)" fill="#000" font-size="13" textLength="15.3" lengthAdjust="spacingAndGlyphs">S2</text>
<text transform="translate(628.8,861.2) rotate(-90)" fill="#000" font-size="13">a</text>
</g>
</svg>
<g shape-rendering="crispEdges">
<rect x="77" y="50" width="1" height="25" fill="#a0a0a0"/>
<rect x="116" y="50" width="1" height="25" fill="#a0a0a0"/>
<rect x="155" y="50" width="1" height="25" fill="#a0a0a0"/>
<rect x="225" y="50" width="1" height="25" fill="#a0a0a0"/>
<rect x="357" y="50" width="1" height="25" fill="#a0a0a0"/>
<rect x="427" y="50" width="1" height="25" fill="#a0a0a0"/>
<rect x="528" y="50" width="1" height="25" fill="#a0a0a0"/>
<rect x="660" y="50" width="1" height="25" fill="#a0a0a0"/>
<rect x="730" y="50" width="1" height="25" fill="#a0a0a0"/>
<rect x="4" y="50" width="2" height="2" fill="#c8c8c8"/>
<rect x="4" y="54" width="2" height="2" fill="#c8c8c8"/>
<rect x="4" y="58" width="2" height="2" fill="#c8c8c8"/>
<rect x="4" y="62" width="2" height="2" fill="#c8c8c8"/>
<rect x="4" y="66" width="2" height="2" fill="#c8c8c8"/>
<rect x="4" y="70" width="2" height="2" fill="#c8c8c8"/>
<rect x="4" y="74" width="2" height="2" fill="#c8c8c8"/>
</g>
<path d="M18.5 51.5 H32.5 L37.5 56.5 V72.5 H18.5 Z" fill="#fff" stroke="#000" stroke-width="1.2"/>
<path d="M32.5 51.5 V56.5 H37.5" fill="none" stroke="#000"/>
<path d="M23 56 L34 62.5 L23 69 Z" fill="#000"/>
<path d="M49.5 57.5 L52.5 54.5 H56.5 L58.5 56.5 H64.5 V62.5 H49.5 Z" fill="#ffff80" stroke="#000"/>
<path d="M49.5 69.5 L54.5 61.5 H70.5 L65.5 69.5 Z" fill="#808000" stroke="#000"/>
<path d="M61 54 Q64 49.5 68 52.5 L69 55" fill="none" stroke="#000" stroke-width="1.3"/>
<path d="M66.5 54 L69.5 56.5 L70.5 52.5" fill="none" stroke="#000" stroke-width="1.2"/>
<rect x="88.5" y="51.5" width="19" height="19" rx="1" fill="#808000" stroke="#000"/>
<rect x="91.5" y="51.5" width="12" height="8" fill="#fff" stroke="#000" stroke-width="0.8"/>
<rect x="92" y="64" width="13" height="7" fill="#000"/>
<rect x="100" y="66" width="3" height="4" fill="#fff"/>
<rect x="105" y="52.5" width="1.5" height="1.5" fill="#fff"/>
<g shape-rendering="crispEdges"><rect x="136" y="60" width="4" height="7" fill="#0000ff"/><rect x="136" y="60" width="2" height="7" fill="#000080"/><rect x="134" y="67" width="7" height="6" fill="#0000ff"/><rect x="134" y="67" width="4" height="6" fill="#000080"/></g>
<path d="M125.5 53 H128.5 L131 52 L134 51 H141 L146 53.5 L149 57.5 L148.7 63 L147 59.5 L144 58 L141.5 58.5 L139 60.5 H133 L131 59 L128.5 60.5 H125.5 Z" fill="#fff" stroke="#000" stroke-width="1.2" stroke-linejoin="round"/>
<path d="M179.5 51.5 H185.5 L183 55 H180 Z" fill="#000"/><rect x="180.5" y="52.3" width="1.6" height="1.6" fill="#fff"/>
<path d="M180.5 55.5 L173.5 63.5" stroke="#000" stroke-width="2.6" fill="none"/>
<path d="M175 58 L173 56.5 L171 57.5 M178 59.5 L180.5 61.5 L184 60.5 L186 60.5 M174 63.5 L170.5 65.5 L164.5 66 V68.5 M175.5 64 L178.5 67.5 L176.5 71 L178.5 72.5" stroke="#000" stroke-width="1.5" fill="none" stroke-linejoin="round"/>
<path d="M167 51.3 L171 53.7 M164 54.5 L168 57" stroke="#a0a0a0" stroke-width="1" fill="none"/>
<path d="M201.5 70.5 Q196.5 65.5 197.5 63 Q199.5 62 201.5 64.5 V55.5 Q203 53.5 204.5 55.5 V52.5 Q206 50.5 207.5 52.5 V52.5 Q209 50.5 210.5 53 V54 Q212 52.5 213.5 54.5 V66 Q213 71 210 72.5 H203 Z" fill="#f0f0f0" stroke="#a8a8a8" stroke-width="1.3"/>
<line x1="249" y1="63.5" x2="256" y2="70.5" stroke="#000" stroke-width="3" stroke-linecap="round"/>
<circle cx="244" cy="58.5" r="7" fill="#fff" stroke="#000" stroke-width="1.4"/>
<path d="M239 56.5 Q240 53.5 242 53.5" stroke="#00e0ff" stroke-width="1.3" fill="none"/>
<path d="M246 63.5 Q248 62.5 249 60.5" stroke="#00e0ff" stroke-width="1.3" fill="none"/>
<path d="M244 54 V63 M239.5 58.5 H248.5" stroke="#000" stroke-width="1.8"/>
<line x1="280" y1="63.5" x2="287" y2="70.5" stroke="#a8a8a8" stroke-width="3" stroke-linecap="round"/>
<circle cx="275" cy="58.5" r="7" fill="none" stroke="#a8a8a8" stroke-width="1.4"/>
<line x1="311" y1="63.5" x2="318" y2="70.5" stroke="#000" stroke-width="3" stroke-linecap="round"/>
<circle cx="306" cy="58.5" r="7" fill="#fff" stroke="#000" stroke-width="1.4"/>
<path d="M301 56.5 Q302 53.5 304 53.5" stroke="#00e0ff" stroke-width="1.3" fill="none"/>
<path d="M308 63.5 Q310 62.5 311 60.5" stroke="#00e0ff" stroke-width="1.3" fill="none"/>
<path d="M301.5 58.5 H310.5" stroke="#000" stroke-width="1.8"/>
<line x1="342" y1="63.5" x2="349" y2="70.5" stroke="#000" stroke-width="3" stroke-linecap="round"/>
<circle cx="337" cy="58.5" r="7" fill="#fff" stroke="#000" stroke-width="1.4"/>
<path d="M332 56.5 Q333 53.5 335 53.5" stroke="#00e0ff" stroke-width="1.3" fill="none"/>
<path d="M339 63.5 Q341 62.5 342 60.5" stroke="#00e0ff" stroke-width="1.3" fill="none"/>
<path d="M328 51 L346 70 M346 52 L328 67 M337 62 L343 72" stroke="#ff0000" stroke-width="1.5"/>
<g shape-rendering="crispEdges">
<rect x="368" y="51" width="1" height="22" fill="#000"/><rect x="366" y="71" width="24" height="1" fill="#000"/>
<rect x="371" y="71" width="1" height="3" fill="#000"/>
<rect x="366" y="55" width="2" height="1" fill="#000"/>
<rect x="375" y="71" width="1" height="3" fill="#000"/>
<rect x="366" y="59" width="2" height="1" fill="#000"/>
<rect x="379" y="71" width="1" height="3" fill="#000"/>
<rect x="366" y="63" width="2" height="1" fill="#000"/>
<rect x="383" y="71" width="1" height="3" fill="#000"/>
<rect x="366" y="67" width="2" height="1" fill="#000"/>
<rect x="387" y="71" width="1" height="3" fill="#000"/>
<rect x="366" y="71" width="2" height="1" fill="#000"/>
</g>
<path d="M369 58 L373 52 L377 57 L382 52 L388 58" fill="none" stroke="#0000c0" stroke-width="1.1"/>
<path d="M369 61.5 L372 59 L375 59.5 L379 61.5 L383 61.5 L386 63 L389 60.5" fill="none" stroke="#ff0000" stroke-width="1.1"/>
<path d="M369 65.5 H372 V67.5 H375 V65.5 H381 V67.5 H389" fill="none" stroke="#000080" stroke-width="1.2"/>
<g stroke="#b0b0b0" fill="none"><path d="M398.5 51 V72.5 H420"/><path d="M404 57 Q408 52 414 52 V72 Q408 70 404 64 Z"/></g>
<g shape-rendering="crispEdges">
<rect x="436" y="51" width="24" height="11" fill="#000080"/>
<rect x="437" y="55" width="22" height="6" fill="#fff"/>
<rect x="438" y="56" width="21" height="4" fill="#f0f0f0"/>
<rect x="437" y="52" width="2" height="2" fill="#fff"/>
<rect x="454" y="52" width="2" height="2" fill="#fff"/>
<rect x="457" y="52" width="2" height="2" fill="#fff"/>
<rect x="436" y="61" width="24" height="12" fill="#000080"/>
<rect x="437" y="65" width="22" height="7" fill="#fff"/>
<rect x="438" y="66" width="21" height="5" fill="#f0f0f0"/>
<rect x="437" y="62" width="2" height="2" fill="#fff"/>
<rect x="454" y="62" width="2" height="2" fill="#fff"/>
<rect x="457" y="62" width="2" height="2" fill="#fff"/>
<rect x="467" y="51" width="15" height="12" fill="#000080"/>
<rect x="468" y="55" width="13" height="7" fill="#fff"/>
<rect x="469" y="56" width="12" height="5" fill="#f0f0f0"/>
<rect x="468" y="52" width="2" height="2" fill="#fff"/>
<rect x="472" y="57" width="14" height="11" fill="#000080"/>
<rect x="473" y="61" width="12" height="6" fill="#fff"/>
<rect x="474" y="62" width="11" height="4" fill="#f0f0f0"/>
<rect x="473" y="58" width="2" height="2" fill="#fff"/>
<rect x="476" y="63" width="15" height="10" fill="#000080"/>
<rect x="477" y="67" width="13" height="5" fill="#fff"/>
<rect x="478" y="68" width="12" height="3" fill="#f0f0f0"/>
<rect x="477" y="64" width="2" height="2" fill="#fff"/>
<rect x="498" y="51" width="12" height="12" fill="#000080"/>
<rect x="499" y="55" width="10" height="7" fill="#fff"/>
<rect x="500" y="56" width="9" height="5" fill="#f0f0f0"/>
<rect x="499" y="52" width="2" height="2" fill="#fff"/>
<rect x="503" y="57" width="11" height="11" fill="#000080"/>
<rect x="504" y="61" width="9" height="6" fill="#fff"/>
<rect x="505" y="62" width="8" height="4" fill="#f0f0f0"/>
<rect x="504" y="58" width="2" height="2" fill="#fff"/>
<rect x="507" y="63" width="12" height="10" fill="#000080"/>
<rect x="508" y="67" width="10" height="5" fill="#fff"/>
<rect x="509" y="68" width="9" height="3" fill="#f0f0f0"/>
<rect x="508" y="64" width="2" height="2" fill="#fff"/>
</g>
<path d="M521.5 57.5 L516.5 52 M516 51.5 V56 M516 51.5 H520.5" stroke="#000" stroke-width="1.4" fill="none"/>
<path d="M546.5 51 V54 L553 64 M555.5 51 V54 L549 64" stroke="#000" stroke-width="1.2" fill="none"/>
<ellipse cx="546.5" cy="67.5" rx="3" ry="3.5" fill="none" stroke="#000080" stroke-width="1.3"/>
<ellipse cx="554.5" cy="67" rx="3" ry="3.5" fill="none" stroke="#000080" stroke-width="1.3"/>
<path d="M570.5 51.5 H577.5 L580.5 54.5 V65.5 H570.5 Z" fill="#fff" stroke="#000"/>
<path d="M579.5 56.5 H585.5 L591.5 61.5 V70.5 H579.5 Z" fill="#fff" stroke="#000080"/>
<path d="M572 56 H577 M572 58.5 H577 M582 63 H589 M582 66 H589" stroke="#000" stroke-width="0.9"/>
<rect x="601" y="53" width="19" height="18" rx="2" fill="#a8a8a8"/><rect x="607" y="51" width="8" height="3" fill="#a8a8a8"/>
<path d="M611.5 61.5 H619.5 L623.5 65.5 V71.5 H611.5 Z" fill="#f0f0f0" stroke="#b8b8b8"/>
<path d="M634 53 H640 V59 H645 V53 H651 V58 L655 66 V73 H646 V66 H639 V73 H631 V66 L634 58 Z" fill="#000"/>
<g fill="#fff"><rect x="636" y="55" width="2" height="2"/><rect x="647" y="55" width="2" height="2"/><rect x="633" y="68" width="2" height="2"/><rect x="648" y="68" width="2" height="2"/><rect x="641" y="61" width="3" height="2"/></g>
<path d="M677.5 52.5 H685.5 L688.5 55.5 V59.5 H677.5 Z" fill="#d0d0d0" stroke="#000"/>
<path d="M671.5 62.5 L674.5 59.5 H690.5 L692.5 62.5 V70.5 H671.5 Z" fill="#d8d8d8" stroke="#000"/>
<rect x="675.5" y="70.5" width="13" height="2" fill="#fff" stroke="#000"/>
<path d="M705.5 52.5 H722.5 L718.5 59.5 H701.5 Z" fill="#fff" stroke="#000"/>
<path d="M700.5 61.5 L704.5 58.5 H723.5 V68.5 L719.5 72.5 H700.5 Z" fill="#fff" stroke="#000"/>
<path d="M700.5 66.5 H719.5 L723.5 62.5 M719.5 61.5 V72.5 M707 55 H716 M706 57 H714" stroke="#000" fill="none" stroke-width="0.9"/>
<rect x="710" y="65" width="4" height="1" fill="#e0d000"/>
<rect x="742" y="70" width="21" height="1" fill="#0000ff" shape-rendering="crispEdges"/>
<path d="M743.5 67.5 L744 62 L752 52 L756 55 L748 65 Z" fill="#ffff00" stroke="#000" stroke-width="1.1"/>
<circle cx="754.5" cy="52.8" r="2.4" fill="#ff0000"/>
<path d="M781.5 51 V61.5 M770.5 61.5 H792.5 L781.5 72 Z" fill="none" stroke="#000" stroke-width="1.3"/>
<rect x="801.5" y="52.5" width="21" height="12" rx="2" fill="#fff" stroke="#000" stroke-width="1.2"/>
<path d="M802 53 V64" stroke="#c8b800" stroke-width="1"/>
<path d="M812 65 V72" stroke="#000" stroke-width="1.2"/>
<text x="812" y="62.5" font-family="Liberation Sans" font-weight="bold" font-size="10" text-anchor="middle">A</text>
<path d="M843.5 51 V52 L851 57 L835 64 L843 69 V73" fill="none" stroke="#000" stroke-width="1.2"/>
<path d="M874 51 V59 M874 64 V73" stroke="#000" stroke-width="1.2"/>
<path d="M866 59.5 H882 M866 64 H882" stroke="#000" stroke-width="1.8"/>
<path d="M902 52 Q910 53 905 58.5 Q911 62 905 66 Q910 71 902 72" fill="none" stroke="#000" stroke-width="1.4"/>
<path d="M937.5 51 V73 M927 56.5 H949 M927 67.5 H949 M927 56.5 L937.5 67 L949 56.5" fill="none" stroke="#000" stroke-width="1.2"/>
<path d="M961.5 55.5 H968.5 Q975.5 55.5 977.5 62 Q975.5 68.5 968.5 68.5 H961.5 Z M956 58.5 H961.5 M956 65.5 H961.5 M977.5 62 H980" fill="none" stroke="#000" stroke-width="1.2"/>
<path d="M993 70.5 Q987 64 988.5 62 Q990.5 61 993 63.5 L991 55 Q991.5 53 993.5 54 L996 60 L995.5 52.5 Q997 50.5 999 52.5 L1000.5 59 L1002 52.5 Q1004 51 1005.5 53 L1004.5 60 L1007 55 Q1009 54 1009.5 56 L1007.5 65 Q1006 70 1003.5 72.5 H995 Z" fill="#fff" stroke="#000" stroke-width="1.3"/>
<path d="M1024.5 72 L1021.5 66.5 Q1019 62.5 1021 59.5 Q1022.5 58 1024 59.5 V56 Q1024.5 53.5 1027 54.5 Q1027.5 52 1030 52.5 Q1031.5 51 1033.5 53 Q1036 52.5 1037 55 V57.5 Q1039.5 57.5 1039 61 V65 Q1038.5 69 1036 72 Z" fill="#fff" stroke="#000" stroke-width="1.3"/>
<path d="M1027 54.5 V59 M1030 52.5 V58.5 M1033.5 53 V58.5 M1037 57.5 V60" stroke="#000" stroke-width="1"/>
<path d="M1055 58 Q1058 52 1064 53.5 Q1070 55.5 1069.5 62 Q1068.5 69 1061 70" fill="none" stroke="#a8a8a8" stroke-width="1.5"/>
<path d="M1052 55 L1054.5 61 L1060 59" fill="none" stroke="#a8a8a8" stroke-width="1.5"/>
<path d="M1099 58 Q1096 52 1090 53.5 Q1084 55.5 1084.5 62 Q1085.5 69 1093 70" fill="none" stroke="#a8a8a8" stroke-width="1.5"/>
<path d="M1102 55 L1099.5 61 L1094 59" fill="none" stroke="#a8a8a8" stroke-width="1.5"/>
<g fill="none" stroke="#a8a8a8">
<path d="M1114 54 Q1118 49.5 1125 50.5 Q1129 51 1131 54 M1129 51 L1131.5 54.5 L1132 51"/>
<path d="M1117 61 H1112.5 V72.5 H1117 M1112.5 66.5 H1116" stroke-width="2.2"/>
<path d="M1121 61.5 H1134 V66 M1125 61.5 V66 M1129.5 61.5 V66" stroke-width="2.2"/>
<path d="M1145 54 Q1149 49.5 1156 50.5 Q1160 51 1162 54 M1160 51 L1162.5 54.5 L1163 51"/>
<path d="M1148 61 H1143.5 V72.5 H1148 M1143.5 66.5 H1147" stroke-width="2.2"/>
<path d="M1160 61 H1164.5 V72.5 H1160 M1164.5 66.5 H1161" stroke-width="2.2"/>
</g>
<text x="1172" y="70" font-family="Liberation Serif" font-style="italic" font-weight="bold" font-size="17">A</text>
<text x="1183.5" y="70" font-family="Liberation Serif" font-style="italic" font-size="14">a</text>
<text x="1205" y="68" font-family="Liberation Sans" font-size="15">.op</text>
<path d="M2.6 3.5 V18.3 L14 10.8 M2.6 3.5 L5.6 5.5 M17.5 3.2 L13.5 11" fill="none" stroke="#000" stroke-width="1.3"/>
<path d="M7.5 3 H9.5 L6.5 9 H10.5 L10 11 H3.5 Z" fill="#800000"/>
<path d="M10 3.5 L17.5 3 L17 5 H15.3 L12.7 11 H11 L13.4 5 L9.7 5.2 Z" fill="#800000"/>
<g shape-rendering="crispEdges"><rect x="1799" y="10" width="10" height="1" fill="#000"/></g>
<path d="M1844.5 3.5 H1853.5 V12.5 H1844.5 Z" fill="none" stroke="#000" stroke-width="0.9" shape-rendering="crispEdges"/>
<path d="M1842.5 5.5 H1851.5 V14.5 H1842.5 Z" fill="#fff" stroke="#000" stroke-width="0.9" shape-rendering="crispEdges"/>
<path d="M1890 5 L1900 15 M1900 5 L1890 15" stroke="#000" stroke-width="1"/>
<g shape-rendering="crispEdges" fill="#0000ff"><rect x="12" y="92" width="4" height="1"/><rect x="15" y="88" width="3" height="9"/></g>
<path d="M17.5 90 L22.5 84.5 M17.5 95 L23 100.5" stroke="#0000ff" stroke-width="1.1" fill="none"/>
<path d="M19 96.5 L21.5 99" stroke="#0000ff" stroke-width="2.6"/>
<g shape-rendering="crispEdges"><rect x="129" y="86" width="13" height="14" fill="#c0c0c0"/><rect x="128" y="86" width="1" height="16" fill="#000"/><rect x="126" y="100" width="16" height="2" fill="#000"/>
<rect x="126" y="87" width="2" height="1" fill="#000"/><rect x="130" y="102" width="1" height="2" fill="#000"/>
<rect x="126" y="90" width="2" height="1" fill="#000"/><rect x="133" y="102" width="1" height="2" fill="#000"/>
<rect x="126" y="93" width="2" height="1" fill="#000"/><rect x="136" y="102" width="1" height="2" fill="#000"/>
<rect x="126" y="96" width="2" height="1" fill="#000"/><rect x="139" y="102" width="1" height="2" fill="#000"/>
<rect x="126" y="99" width="2" height="1" fill="#000"/><rect x="142" y="102" width="1" height="2" fill="#000"/>
</g>
<path d="M129 94 L132 90.5 L134 90.5 L136 93.5 L138 93 L142 89" fill="none" stroke="#ff0000" stroke-width="1.3"/>
<rect x="12" y="116" width="16" height="16" fill="#c8c8c8" shape-rendering="crispEdges"/>
<path d="M12.5 120.5 L15.5 117.5 L19 120.5 L22.5 117.5 L26.5 120.5" fill="none" stroke="#0000ff" stroke-width="1.2"/>
<g shape-rendering="crispEdges"><rect x="15" y="123" width="3" height="1" fill="#f00"/><rect x="19" y="124" width="1" height="1" fill="#f00"/><rect x="23" y="125" width="2" height="1" fill="#f00"/><rect x="17" y="128" width="1" height="1" fill="#00f"/><rect x="23" y="128" width="1" height="1" fill="#00f"/><rect x="12" y="130" width="16" height="2" fill="#000"/><rect x="12" y="120" width="1" height="1" fill="#000"/><rect x="12" y="125" width="1" height="1" fill="#000"/></g>
<g shape-rendering="crispEdges" fill="#0000ff"><rect x="14" y="580" width="4" height="1"/><rect x="17" y="576" width="3" height="9"/></g>
<path d="M19.5 578 L24.5 572.5 M19.5 583 L25 588.5" stroke="#0000ff" stroke-width="1.1" fill="none"/>
<path d="M21 584.5 L23.5 587" stroke="#0000ff" stroke-width="2.6"/>
<defs><linearGradient id="blugi" x1="0" y1="0" x2="0" y2="1"><stop offset="0" stop-color="#c9d6e3"/><stop offset="1" stop-color="#d2dde9"/></linearGradient>
<linearGradient id="bluga" x1="0" y1="0" x2="0" y2="1"><stop offset="0" stop-color="#b5c9e0"/><stop offset="0.5" stop-color="#a7bfdc"/><stop offset="1" stop-color="#b6cde6"/></linearGradient>
<linearGradient id="redg" x1="0" y1="0" x2="0" y2="1"><stop offset="0" stop-color="#e8a090"/><stop offset="0.45" stop-color="#d47060"/><stop offset="0.5" stop-color="#c04028"/><stop offset="1" stop-color="#d87560"/></linearGradient></defs>
<rect x="1808.5" y="115.5" width="31" height="17" rx="2.5" fill="url(#blugi)" stroke="#6f82a6"/>
<rect x="1842.5" y="115.5" width="31" height="17" rx="2.5" fill="url(#blugi)" stroke="#6f82a6"/>
<rect x="1876.5" y="115.5" width="31" height="17" rx="2.5" fill="url(#blugi)" stroke="#6f82a6"/>
<rect x="1818.5" y="123.5" width="10" height="4" rx="1" fill="#fff" stroke="#303850"/>
<rect x="1852.5" y="119.5" width="9" height="8" rx="1" fill="#fff" stroke="#303850"/>
<rect x="1855.5" y="122.5" width="3" height="2" fill="#b8c8dc" stroke="#303850" stroke-width="0.8"/>
<path d="M1888 120 L1896 126 M1896 120 L1888 126" stroke="#303850" stroke-width="4" stroke-linecap="round"/>
<path d="M1888 120 L1896 126 M1896 120 L1888 126" stroke="#fff" stroke-width="2.2" stroke-linecap="round"/>
<rect x="1808.5" y="572.5" width="31" height="17" rx="2.5" fill="url(#bluga)" stroke="#6f82a6"/>
<rect x="1842.5" y="572.5" width="31" height="17" rx="2.5" fill="url(#bluga)" stroke="#6f82a6"/>
<rect x="1876.5" y="572.5" width="31" height="17" rx="2.5" fill="url(#redg)" stroke="#4a1010"/>
<rect x="1818.5" y="580.5" width="10" height="4" rx="1" fill="#fff" stroke="#303850"/>
<rect x="1852.5" y="576.5" width="9" height="8" rx="1" fill="#fff" stroke="#303850"/>
<rect x="1855.5" y="579.5" width="3" height="2" fill="#b8c8dc" stroke="#303850" stroke-width="0.8"/>
<path d="M1888 577 L1896 583 M1896 577 L1888 583" stroke="#303850" stroke-width="4" stroke-linecap="round"/>
<path d="M1888 577 L1896 583 M1896 577 L1888 583" stroke="#fff" stroke-width="2.2" stroke-linecap="round"/>
</svg>
</body></html>
